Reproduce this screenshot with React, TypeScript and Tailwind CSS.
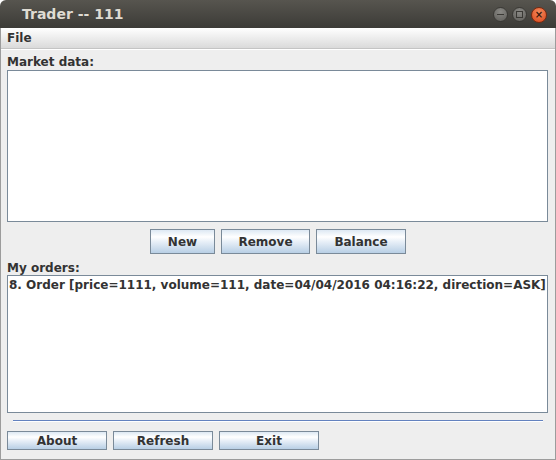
import React from 'react';

const font = { fontFamily: '"DejaVu Sans", "Liberation Sans", sans-serif' };

function SwingButton({ label, w, h }: { label: string; w: string; h: string }) {
  return (
    <button
      className={`${w} ${h} border border-[#7a8a99] bg-[linear-gradient(to_bottom,#dde8f3_0%,#ffffff_30%,#e9f0f8_50%,#b8cfe5_100%)] text-[12px] font-bold text-[#333333] leading-none flex items-center justify-center`}
    >
      {label}
    </button>
  );
}

export default function App() {
  return (
    <div className="w-[556px] h-[460px] bg-white" style={font}>
      <div className="w-full h-full flex flex-col rounded-t-[6px] overflow-hidden">
        {/* Title bar */}
        <div className="h-[28px] flex items-center justify-between bg-[linear-gradient(to_bottom,#57554f,#3c3b37)] pl-[22px] pr-[9px]">
          <span className="text-[14px] font-bold text-[#dfdbd2] leading-none">Trader -- 111</span>
          <div className="flex items-center gap-[4px] mt-[1px]">
            <div className="w-[15px] h-[15px] rounded-full bg-[radial-gradient(circle_at_50%_30%,#8a8985,#5e5d59)] border border-[#3a3935] flex items-center justify-center">
              <div className="w-[7px] h-[1.5px] bg-[#3a3935]" />
            </div>
            <div className="w-[15px] h-[15px] rounded-full bg-[radial-gradient(circle_at_50%_30%,#8a8985,#5e5d59)] border border-[#3a3935] flex items-center justify-center">
              <div className="w-[7px] h-[7px] border border-[#3a3935]" />
            </div>
            <div className="w-[16px] h-[16px] rounded-full bg-[radial-gradient(circle_at_50%_30%,#f58a5c,#d9461b)] border border-[#7a2a10] flex items-center justify-center text-[10px] leading-none text-[#3a1a0c] font-bold">
              ×
            </div>
          </div>
        </div>

        {/* Window body */}
        <div className="flex-1 flex flex-col border-x border-b border-[#9c9c9c] bg-[#eeeeee]">
          {/* Menu bar */}
          <div className="h-[21px] flex items-center px-[6px] bg-[linear-gradient(to_bottom,#ffffff,#dadada)] border-b border-[#c4c4c4] shadow-[0_1px_0_#ffffff]">
            <span className="text-[12px] font-bold text-[#333333] leading-none">File</span>
          </div>

          <div className="flex-1 flex flex-col px-[6px] pt-[6px]">
            <div className="text-[12px] font-bold text-[#333333] leading-[14px] h-[15px]">Market data:</div>
            <div className="h-[152px] border border-[#7a8a99] bg-white mr-[1px]" />

            <div className="flex justify-center gap-[6px] mt-[7px]">
              <SwingButton label="New" w="w-[65px]" h="h-[25px]" />
              <SwingButton label="Remove" w="w-[89px]" h="h-[25px]" />
              <SwingButton label="Balance" w="w-[90px]" h="h-[25px]" />
            </div>

            <div className="text-[12px] font-bold text-[#333333] leading-[14px] h-[14px] mt-[7px]">My orders:</div>
            <div className="h-[138px] border border-[#7a8a99] bg-white mr-[1px] pl-[1px] pt-[2px]">
              <div className="text-[12px] font-bold text-[#333333] leading-[14px] whitespace-nowrap">
                8. Order [price=1111, volume=111, date=04/04/2016 04:16:22, direction=ASK]
              </div>
            </div>

            <div className="mx-[6px] mt-[7px] h-[1px] bg-[#6382bf] shadow-[0_1px_0_#ffffff]" />

            <div className="flex gap-[6px] mt-[10px]">
              <SwingButton label="About" w="w-[100px]" h="h-[19px]" />
              <SwingButton label="Refresh" w="w-[100px]" h="h-[19px]" />
              <SwingButton label="Exit" w="w-[100px]" h="h-[19px]" />
            </div>
          </div>
        </div>
      </div>
    </div>
  );
}
